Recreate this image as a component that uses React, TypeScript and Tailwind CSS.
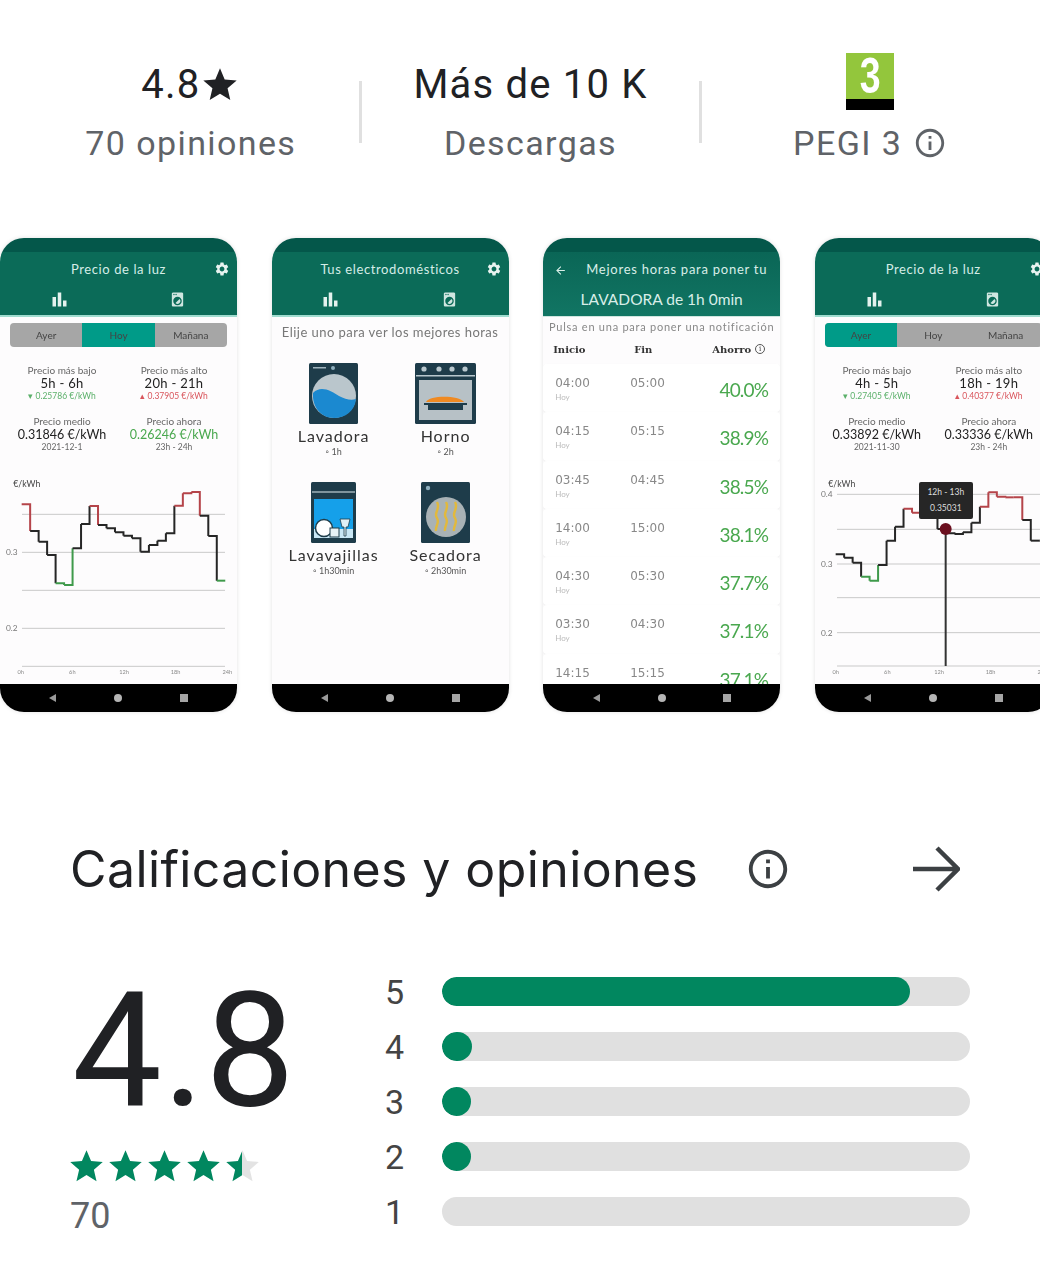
import type { ReactNode } from 'react';
import { MdArrowBack, MdBarChart, MdInfoOutline, MdLocalLaundryService, MdSettings, MdStar } from 'react-icons/md';

const SANS = "font-['Roboto',sans-serif]";
const HEADING = "font-['Inter',sans-serif]";
const APP = "font-['Lato',sans-serif]";

const DAY_ONE = [823, 903, 935, 975, 1060, 1065, 955, 882, 828, 885, 895, 907, 917, 925, 965, 945, 932, 910, 827, 790, 786, 857, 918, 1052];
const DAY_TWO = [973, 983, 998, 1040, 1052, 1005, 932, 890, 836, 848, 836, 860, 897, 910, 912, 907, 878, 830, 787, 800, 802, 802, 870, 932, 932];

const ROWS = [
  { from: '04:00', to: '05:00', pct: '40.0%', day: true },
  { from: '04:15', to: '05:15', pct: '38.9%', day: true },
  { from: '03:45', to: '04:45', pct: '38.5%', day: true },
  { from: '14:00', to: '15:00', pct: '38.1%', day: true },
  { from: '04:30', to: '05:30', pct: '37.7%', day: true },
  { from: '03:30', to: '04:30', pct: '37.1%', day: true },
  { from: '14:15', to: '15:15', pct: '37.1%', day: false },
];

const BARS = [
  { label: '5', width: 468 },
  { label: '4', width: 30 },
  { label: '3', width: 29 },
  { label: '2', width: 29 },
  { label: '1', width: 0 },
];

function Stat({ top, bottom }: { top: ReactNode; bottom: ReactNode }) {
  return (
    <div className="w-[340px] flex flex-col items-center">
      <div className="h-[62px] pt-[2px] flex items-center text-[40px] text-[#202124] tracking-[1.2px]">{top}</div>
      <div className="h-[56px] flex items-center text-[34px] text-[#5f6368] tracking-[1.4px]">{bottom}</div>
    </div>
  );
}

function NavBar() {
  return (
    <div className="h-[28px] shrink-0 bg-black grid grid-cols-3 items-center justify-items-center px-[20px]">
      <div className="w-0 h-0 border-y-[4px] border-y-transparent border-r-[7px] border-r-[#9a9a9a]" />
      <div className="w-[8px] h-[8px] rounded-full bg-[#b5b5b5]" />
      <div className="w-[8px] h-[8px] bg-[#a5a5a5]" />
    </div>
  );
}

function Phone({ header, children }: { header: ReactNode; children: ReactNode }) {
  return (
    <div className={`${APP} w-[237px] h-[474px] shrink-0 rounded-[24px] overflow-hidden bg-[#fdfcfd] flex flex-col shadow-[0_0_4px_rgba(0,0,0,0.12)]`}>
      <div className="h-[14px] shrink-0 bg-[#04574a]" />
      <div className="h-[65px] shrink-0">{header}</div>
      <div className="flex-1 min-h-0 overflow-hidden blur-[0.3px]">{children}</div>
      <NavBar />
    </div>
  );
}

function TabHeader({ title }: { title: string }) {
  return (
    <div className="h-full bg-[#0b6b58] border-b-2 border-[#9fdccf] flex flex-col text-[#d5ede7]">
      <div className="h-[35px] flex items-center relative">
        <span className="w-full text-center text-[13px] tracking-[0.6px]">{title}</span>
        <MdSettings size={16} className="absolute right-[7px] top-[9px] text-[#e8f3f0]" />
      </div>
      <div className="mt-[2px] grid grid-cols-2 items-center justify-items-center">
        <MdBarChart size={21} className="text-[#e4f2ee]" />
        <MdLocalLaundryService size={17} className="text-[#cfe6e0]" />
      </div>
    </div>
  );
}

function Segmented({ active }: { active: number }) {
  return (
    <div className="mt-[6px] mx-[10px] h-[24px] grid grid-cols-3 rounded-[4px] overflow-hidden bg-[#a6a6a6] text-[10px] text-[#444]">
      {['Ayer', 'Hoy', 'Mañana'].map((label, i) => (
        <div key={label} className={`flex items-center justify-center ${i === active ? 'bg-[#009b88]' : ''}`}>{label}</div>
      ))}
    </div>
  );
}

function PriceCell({ label, value, sub, subClass = 'text-[#666]', valueClass = 'text-[#222]', big = false }: {
  label: string; value: string; sub: string; subClass?: string; valueClass?: string; big?: boolean;
}) {
  return (
    <div className="flex flex-col items-center">
      <span className="text-[10px] leading-[13px] text-[#666]">{label}</span>
      <span className={`leading-[13px] whitespace-nowrap ${big ? 'text-[12.5px]' : 'text-[13px] tracking-[0.3px]'} ${valueClass}`}>{value}</span>
      <span className={`text-[8.5px] leading-[13px] whitespace-nowrap ${subClass}`}>{sub}</span>
    </div>
  );
}

function stepColor(y: number, high: number, low: number) {
  if (y < high) return '#b5444a';
  if (y > low) return '#3f9a4b';
  return '#262626';
}

function Chart({ values, startX, viewX, grid, labels, high, low, children }: {
  values: number[]; startX: number; viewX: number; grid: number[]; labels: { y: number; text: string }[]; high: number; low: number; children?: ReactNode;
}) {
  const step = 25.45;
  return (
    <svg width={237} height={214} viewBox={`${viewX} 720 711 642`} className="block">
      {grid.map((y) => (
        <line key={y} x1={viewX + 66} x2={viewX + 630 + 45} y1={y} y2={y} stroke="#c9c9c9" strokeWidth={3} />
      ))}
      <text x={viewX + 40} y={770} fontSize={26} fill="#444">€/kWh</text>
      {labels.map((l) => (
        <text key={l.text} x={viewX + 18} y={l.y + 9} fontSize={25} fill="#777">{l.text}</text>
      ))}
      {['0h', '6h', '12h', '18h', '24h'].map((t, i) => (
        <text key={t} x={viewX + 62 + i * 155} y={1333} fontSize={17} fill="#888" textAnchor="middle">{t}</text>
      ))}
      {values.map((y, i) => {
        const x1 = startX + i * step;
        const x2 = x1 + step;
        const next = values[i + 1] ?? y;
        return (
          <path key={i} d={`M${x1} ${y}H${x2}V${next}`} fill="none" stroke={stepColor(y, high, low)} strokeWidth={6} />
        );
      })}
      {children}
    </svg>
  );
}

function PriceScreen({ active, cells, chart }: { active: number; cells: ReactNode; chart: ReactNode }) {
  return (
    <div className="h-full flex flex-col">
      <Segmented active={active} />
      <div className="mt-[17px] grid grid-cols-[124px_100px] gap-y-[12px]">{cells}</div>
      <div className="mt-[16px] relative">{chart}</div>
    </div>
  );
}

function WasherIcon() {
  return (
    <svg width={49} height={61} viewBox="0 0 49 61">
      <rect width={49} height={61} rx={1.5} fill="#1e3c4a" />
      <rect x={4} y={4} width={13} height={1.5} fill="#9fb4bd" />
      <circle cx={24} cy={5} r={2} fill="#8fb0bf" />
      <circle cx={25} cy={33} r={22} fill="#bac6cc" />
      <path d="M4 30C12 22 22 28 30 33C36 36 42 38 47 36C46 48 36 55 25 55C12 55 3 44 4 30Z" fill="#1b89d0" />
    </svg>
  );
}

function OvenIcon() {
  return (
    <svg width={61} height={61} viewBox="0 0 61 61">
      <rect width={61} height={61} rx={1.5} fill="#1e3c4a" />
      {[9, 24, 37, 50].map((x) => <circle key={x} cx={x} cy={6} r={2.6} fill="#b9c8ce" />)}
      <rect x={1} y={12} width={59} height={1.5} fill="#b9c8ce" />
      <rect x={4} y={17} width={53} height={40} fill="#b7c1c6" />
      <path d="M11 39C14 32 44 32 49 39Z" fill="#ef8a22" />
      <path d="M9 40H52V42H48V47H13V42H9Z" fill="#1e3c4a" />
    </svg>
  );
}

function DishwasherIcon() {
  return (
    <svg width={45} height={61} viewBox="0 0 45 61">
      <rect width={45} height={61} rx={1.5} fill="#1e3c4a" />
      <rect x={1} y={9} width={43} height={2} fill="#7e949d" />
      <rect x={3} y={17} width={39} height={39} fill="#15a0ea" />
      <rect x={3} y={47} width={39} height={9} fill="#c9e7f5" />
      <circle cx={13} cy={46} r={8.5} fill="#fff" stroke="#1e3c4a" strokeWidth={1.5} />
      <rect x={19} y={46} width={9} height={9} fill="#e8f2f6" stroke="#1e3c4a" />
      <path d="M29 37H39L37 45H35V54H33V45H31Z" fill="#dff0f7" stroke="#1e3c4a" strokeWidth={0.8} />
    </svg>
  );
}

function DryerIcon() {
  return (
    <svg width={49} height={61} viewBox="0 0 49 61">
      <rect width={49} height={61} rx={1.5} fill="#1e3c4a" />
      <circle cx={7} cy={6} r={2.2} fill="#8fb0bf" />
      <circle cx={25} cy={35} r={20} fill="#a9b2b5" />
      {[16, 25, 34].map((x) => (
        <path key={x} d={`M${x} 20C${x + 4} 27 ${x - 4} 31 ${x} 36C${x + 3} 41 ${x - 2} 44 ${x - 1} 49`} fill="none" stroke="#e2b93c" strokeWidth={2.4} />
      ))}
    </svg>
  );
}

function Appliance({ icon, name, time }: { icon: ReactNode; name: string; time: string }) {
  return (
    <div className="flex flex-col items-center">
      {icon}
      <span className="mt-[2px] text-[16px] leading-[20px] text-[#333] tracking-[1px] whitespace-nowrap">{name}</span>
      <span className="text-[9px] leading-[12px] text-[#555]">◦ {time}</span>
    </div>
  );
}

function AppliancesScreen() {
  return (
    <div className="flex flex-col">
      <p className="mt-[5px] text-center text-[13px] leading-[20px] text-[#777] tracking-[0.45px] whitespace-nowrap">Elije uno para ver los mejores horas</p>
      <div className="mt-[21px] grid grid-cols-[124px_100px] gap-y-[24px]">
        <Appliance icon={<WasherIcon />} name="Lavadora" time="1h" />
        <Appliance icon={<OvenIcon />} name="Horno" time="2h" />
        <Appliance icon={<DishwasherIcon />} name="Lavavajillas" time="1h30min" />
        <Appliance icon={<DryerIcon />} name="Secadora" time="2h30min" />
      </div>
    </div>
  );
}

function BestHoursHeader() {
  return (
    <div className="h-full bg-gradient-to-b from-[#0a6656] to-[#117563] border-b border-[#cfe5df] flex flex-col text-[#d8eee8]">
      <div className="h-[36px] flex items-center pl-[11px] gap-[19px]">
        <MdArrowBack size={13} />
        <span className="text-[13px] tracking-[0.75px] whitespace-nowrap">Mejores horas para poner tu</span>
      </div>
      <div className="text-center text-[15.5px] leading-[22px] whitespace-nowrap">LAVADORA de 1h 0min</div>
    </div>
  );
}

function BestHoursScreen() {
  return (
    <div className="flex flex-col">
      <p className="mt-[3px] text-center text-[11px] leading-[14px] text-[#888] tracking-[0.75px] whitespace-nowrap">Pulsa en una para poner una notificación</p>
      <div className="h-[30px] pl-[10px] pr-[15px] grid grid-cols-[81px_1fr_auto] items-center font-['DejaVu_Serif',serif] font-bold text-[10px] text-[#333]">
        <span>Inicio</span>
        <span>Fin</span>
        <span className="flex items-center gap-[4px]">Ahorro <span className="w-[10px] h-[10px] rounded-full border border-[#555] text-[7px] leading-[8px] text-center font-normal">i</span></span>
      </div>
      {ROWS.map((row) => (
        <div key={row.from + row.pct} className="h-[48.3px] shrink-0 pl-[12px] pr-[12px] pt-[11px] flex bg-white rounded-[4px] shadow-[0_1px_2px_rgba(0,0,0,0.08)]">
          <div className="w-[75px] flex flex-col">
            <span className="text-[12px] leading-[16px] text-[#888] font-['DejaVu_Sans',sans-serif]">{row.from}</span>
            {row.day && <span className="text-[8px] leading-[12px] text-[#bbb]">Hoy</span>}
          </div>
          <span className="text-[12px] leading-[16px] text-[#888] font-['DejaVu_Sans',sans-serif]">{row.to}</span>
          <span className="ml-auto pt-[3px] text-[19px] leading-[24px] text-[#4aa84f] tracking-[-0.8px]">{row.pct}</span>
        </div>
      ))}
    </div>
  );
}

function StarRow() {
  const d = 'M12 17.27L18.18 21l-1.64-7.03L22 9.24l-7.19-.61L12 2 9.19 8.63 2 9.24l5.46 4.73L5.82 21z';
  return (
    <div className="flex -ml-[3px]">
      {[0, 1, 2, 3, 4].map((i) => (
        <svg key={i} width={39} height={39} viewBox="0 0 24 24" className="block">
          <defs>
            <linearGradient id="half-star">
              <stop offset="50%" stopColor="#01875f" />
              <stop offset="50%" stopColor="#e3e3e3" />
            </linearGradient>
          </defs>
          <path d={d} fill={i === 4 ? 'url(#half-star)' : '#01875f'} />
        </svg>
      ))}
    </div>
  );
}

export default function App() {
  return (
    <div className={`${SANS} w-[1040px] h-[1280px] bg-white overflow-hidden`}>
      <div className="pt-[53px] pl-[21px] flex items-center h-[171px]">
        <Stat top={<>4.8<MdStar size={40} className="-mt-[1px]" /></>} bottom="70 opiniones" />
        <div className="w-[3px] h-[62px] -mx-[1.5px] bg-[#e0e0e0]" />
        <Stat top="Más de 10 K" bottom="Descargas" />
        <div className="w-[3px] h-[62px] -mx-[1.5px] bg-[#e0e0e0]" />
        <Stat
          top={
            <div className="w-[48px] h-[57px] -mt-[7px] flex flex-col">
              <div className="flex-1 bg-[#93c63c] flex items-center justify-center text-white font-['Liberation_Sans',sans-serif] font-bold text-[50px] leading-[46px]"><span className="scale-x-75">3</span></div>
              <div className="h-[11px] bg-black" />
            </div>
          }
          bottom={<span className="flex items-center gap-[11px]">PEGI 3 <MdInfoOutline size={34} /></span>}
        />
      </div>

      <div className="mt-[67px] flex gap-[34.6px] w-[1040px]">
        <Phone header={<TabHeader title="Precio de la luz" />}>
          <PriceScreen
            active={1}
            cells={
              <>
                <PriceCell label="Precio más bajo" value="5h - 6h" sub="▾ 0.25786 €/kWh" subClass="text-[#5bb06a]" />
                <PriceCell label="Precio más alto" value="20h - 21h" sub="▴ 0.37905 €/kWh" subClass="text-[#d9555c]" />
                <PriceCell big label="Precio medio" value="0.31846 €/kWh" sub="2021-12-1" />
                <PriceCell big label="Precio ahora" value="0.26246 €/kWh" sub="23h - 24h" valueClass="text-[#4aa84f]" />
              </>
            }
            chart={
              <Chart
                values={DAY_ONE}
                startX={65}
                viewX={0}
                grid={[853, 967, 1081, 1195, 1309]}
                labels={[{ y: 967, text: '0.3' }, { y: 1195, text: '0.2' }]}
                high={850}
                low={1000}
              />
            }
          />
        </Phone>

        <Phone header={<TabHeader title="Tus electrodomésticos" />}>
          <AppliancesScreen />
        </Phone>

        <Phone header={<BestHoursHeader />}>
          <BestHoursScreen />
        </Phone>

        <Phone header={<TabHeader title="Precio de la luz" />}>
          <PriceScreen
            active={0}
            cells={
              <>
                <PriceCell label="Precio más bajo" value="4h - 5h" sub="▾ 0.27405 €/kWh" subClass="text-[#5bb06a]" />
                <PriceCell label="Precio más alto" value="18h - 19h" sub="▴ 0.40377 €/kWh" subClass="text-[#d9555c]" />
                <PriceCell big label="Precio medio" value="0.33892 €/kWh" sub="2021-11-30" />
                <PriceCell big label="Precio ahora" value="0.33336 €/kWh" sub="23h - 24h" />
              </>
            }
            chart={
              <>
                <Chart
                  values={DAY_TWO}
                  startX={107}
                  viewX={45}
                  grid={[793, 898, 1002, 1103, 1208, 1308]}
                  labels={[{ y: 793, text: '0.4' }, { y: 1002, text: '0.3' }, { y: 1208, text: '0.2' }]}
                  high={850}
                  low={1030}
                >
                  <line x1={437} x2={437} y1={897} y2={1308} stroke="#333" strokeWidth={6} />
                  <circle cx={437} cy={897} r={18} fill="#6b0f1f" />
                </Chart>
                <div className="absolute left-[104px] top-[12px] w-[54px] h-[37px] rounded-[2px] bg-[#262626] flex flex-col items-center justify-center gap-[5px] text-[8.5px] leading-[11px] text-[#ddd]">
                  <span>12h - 13h</span>
                  <span>0.35031</span>
                </div>
              </>
            }
          />
        </Phone>
      </div>

      <div className="mt-[122px] pl-[70px] pr-[80px] flex items-center h-[70px]">
        <h2 className={`${HEADING} text-[50px] tracking-[0.4px] leading-none text-[#202124] whitespace-nowrap`}>Calificaciones y opiniones</h2>
        <MdInfoOutline size={46} className="ml-[47px] text-[#3c4043]" />
        <svg width={48} height={46} viewBox="0 0 48 46" className="ml-auto text-[#3c4043]">
          <path d="M1 23H45M25 2L46 23L25 44" fill="none" stroke="currentColor" strokeWidth={4.5} />
        </svg>
      </div>

      <div className="mt-[72px] pl-[70px] flex">
        <div className="w-[317px] flex flex-col">
          <span className="-mt-[5px] ml-[2px] text-[160px] leading-[160px] text-[#202124] tracking-[0.5px]">4.8</span>
          <div className="mt-[16px]"><StarRow /></div>
          <span className="mt-[9px] text-[36px] leading-[42px] text-[#5f6368]">70</span>
        </div>
        <div className="-ml-[2px] flex flex-col gap-[26px] pt-[1px]">
          {BARS.map((bar) => (
            <div key={bar.label} className="h-[29px] flex items-center">
              <span className="w-[57px] text-[34px] leading-none text-[#444]">{bar.label}</span>
              <div className="w-[528px] h-[29px] rounded-full bg-[#e0e0e0] overflow-hidden">
                <div className="h-full rounded-full bg-[#01875f]" style={{ width: bar.width }} />
              </div>
            </div>
          ))}
        </div>
      </div>
    </div>
  );
}
